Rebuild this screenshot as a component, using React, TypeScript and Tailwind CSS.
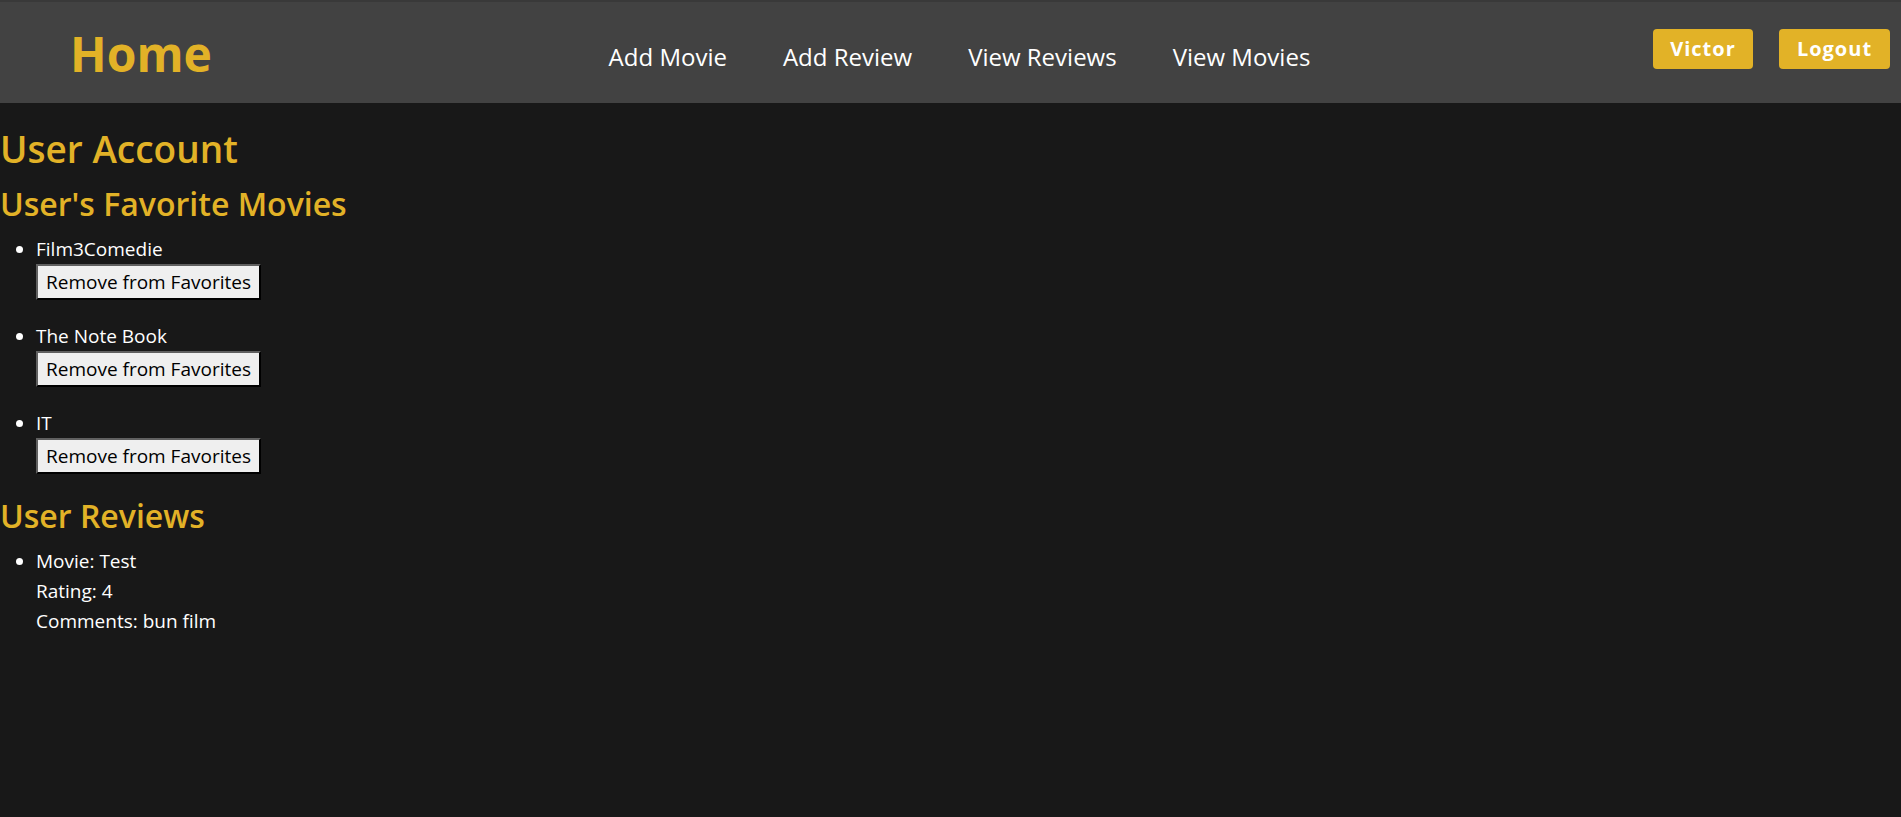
import * as React from "react";

const favorites = ["Film3Comedie", "The Note Book", "IT"];

const reviews = [{ movie: "Test", rating: 4, comments: "bun film" }];

const navLinks = ["Add Movie", "Add Review", "View Reviews", "View Movies"];

function Header() {
  return (
    <header className="h-[103px] bg-[#424242] border-t-2 border-[#393939] flex justify-between items-start pr-[11px]">
      <a
        href="#"
        className="mt-[28px] pl-[70px] pr-[54px] text-[48px] leading-none font-bold text-[#e2b227]"
      >
        Home
      </a>
      <nav className="mt-[43px] flex gap-[56px] text-[24px] leading-none text-white">
        {navLinks.map((link) => (
          <a key={link} href="#" className="whitespace-nowrap">
            {link}
          </a>
        ))}
      </nav>
      <div className="mt-[27px] flex gap-[26px]">
        <button className="w-[100px] h-10 rounded-[4px] bg-[#e2b227] text-white font-bold text-[20px] tracking-[1px]">
          Victor
        </button>
        <button className="w-[111px] h-10 rounded-[4px] bg-[#e2b227] text-white font-bold text-[20px] tracking-[1px]">
          Logout
        </button>
      </div>
    </header>
  );
}

export default function App() {
  return (
    <div className="min-h-screen bg-[#181818] text-white font-['Open_Sans',sans-serif]">
      <Header />
      <main>
        <h1 className="mt-[22px] text-[37px] leading-[48px] font-semibold text-[#e2b227]">
          User Account
        </h1>

        {/* Favorites */}
        <section>
          <h2 className="mt-[10px] text-[32px] leading-[42px] font-semibold text-[#e2b227]">
            User's Favorite Movies
          </h2>
          <ul className="mt-[9px] list-disc pl-[36px] text-[19px] leading-[30px]">
            {favorites.map((title) => (
              <li key={title} className="mb-[21px]">
                {title}
                <br />
                <button className="h-9 px-2 bg-[#efefef] text-black border-2 border-t-[#606060] border-l-[#606060] border-b-black border-r-black leading-none">
                  Remove from Favorites
                </button>
              </li>
            ))}
          </ul>
        </section>

        {/* Reviews */}
        <section>
          <h2 className="mt-[5px] text-[32px] leading-[42px] font-semibold text-[#e2b227]">
            User Reviews
          </h2>
          <ul className="mt-[9px] list-disc pl-[36px] text-[19px] leading-[30px]">
            {reviews.map((r, i) => (
              <li key={i}>
                <p>Movie: {r.movie}</p>
                <p>Rating: {r.rating}</p>
                <p>Comments: {r.comments}</p>
              </li>
            ))}
          </ul>
        </section>
      </main>
    </div>
  );
}
